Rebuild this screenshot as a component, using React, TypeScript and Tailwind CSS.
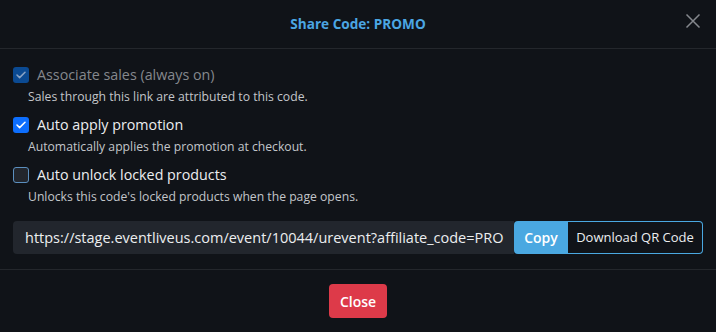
import React from "react"

const font = { fontFamily: '"Open Sans", "Noto Sans", sans-serif' }

const Check = ({ checked, disabled }: { checked: boolean; disabled?: boolean }) => {
  if (!checked) {
    return <span className="block w-4 h-4 rounded-[3px] bg-[#22262d] border border-[#5b8fbf] shrink-0" />
  }
  return (
    <span
      className={`flex items-center justify-center w-4 h-4 rounded-[3px] shrink-0 ${
        disabled ? "bg-[#0b4a92]" : "bg-[#0d6efd]"
      }`}
    >
      <svg width="10" height="8" viewBox="0 0 10 8" fill="none">
        <path
          d="M1 4l2.6 2.6L9 1.2"
          stroke={disabled ? "#8aa3c4" : "#fff"}
          strokeWidth="1.5"
          strokeLinecap="round"
          strokeLinejoin="round"
        />
      </svg>
    </span>
  )
}

const Option = ({
  label,
  desc,
  checked,
  disabled
}: {
  label: string
  desc: string
  checked: boolean
  disabled?: boolean
}) => (
  <div className="flex flex-col">
    <label className="flex items-center gap-2">
      <Check checked={checked} disabled={disabled} />
      <span className={`text-[14.3px] leading-5 font-medium ${disabled ? "text-[#85888d]" : "text-[#eceef0]"}`}>{label}</span>
    </label>
    <p className="pl-[15px] mt-[4px] text-[12.2px] leading-4 text-[#c3c6ca]">{desc}</p>
  </div>
)

export default function App() {
  return (
    <div className="w-[716px] h-[332px] bg-[#101318] flex flex-col" style={font}>
      <div className="relative h-[49px] flex items-center justify-center border-b border-[#24272c]">
        <h2 className="text-[13.6px] font-bold text-[#4ba6e3]">Share Code: PROMO</h2>
        <button className="absolute right-[15px] top-[13px] text-[#85888d]">
          <svg width="16" height="16" viewBox="0 0 16 16" fill="none">
            <path d="M1.5 1.5l13 13M14.5 1.5l-13 13" stroke="currentColor" strokeWidth="1.5" />
          </svg>
        </button>
      </div>
      <div className="flex-1 px-[13px] pt-[16px] flex flex-col gap-[10px] border-b border-[#24272c]">
        <Option
          label="Associate sales (always on)"
          desc="Sales through this link are attributed to this code."
          checked
          disabled
        />
        <Option label="Auto apply promotion" desc="Automatically applies the promotion at checkout." checked />
        <Option label="Auto unlock locked products" desc="Unlocks this code's locked products when the page opens." checked={false} />
        <div className="flex mt-[6px] h-[33px]">
          <div className="flex-1 flex items-center bg-[#22262d] rounded-l-[4px] pl-3 text-[14.5px] text-[#eceef0] overflow-hidden whitespace-nowrap">
            https://stage.eventliveus.com/event/10044/urevent?affiliate_code=PRO
          </div>
          <button className="w-[54px] bg-[#4aa8e1] text-white text-[14px] font-semibold rounded-l-[4px]">Copy</button>
          <button className="w-[135px] border border-l-0 border-[#4aa8e1] rounded-r-[4px] text-[#eceef0] text-[13px] font-medium">
            Download QR Code
          </button>
        </div>
      </div>
      <div className="h-[62px] flex items-center justify-center">
        <button className="w-[58px] h-[34px] rounded-[4px] bg-[#dd3a49] text-white text-[14px] font-semibold">Close</button>
      </div>
    </div>
  )
}
